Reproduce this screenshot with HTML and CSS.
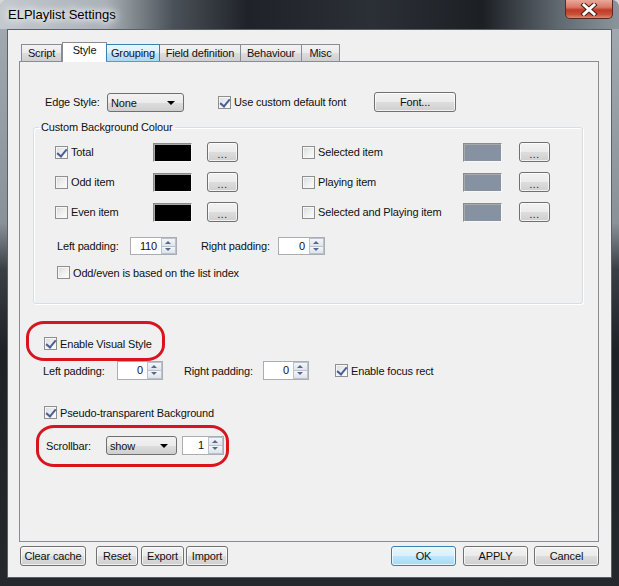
FILE: index.html
```html
<!DOCTYPE html>
<html lang="en">
<head>
    <meta charset="UTF-8">
    <title>ELPlaylist Settings</title>
    <link rel="stylesheet" href="styles.css">
</head>
<body>
    <div class="window">
        <div class="titlebar">
            <span class="title">ELPlaylist Settings</span>
            <span class="close-btn">
                <svg width="20" height="13" viewBox="0 0 20 13">
                    <path d="M5 2 L15 11 M15 2 L5 11" stroke="#4a2018" stroke-width="5" stroke-linecap="square"/>
                    <path d="M5 2 L15 11 M15 2 L5 11" stroke="#fff" stroke-width="3" stroke-linecap="square"/>
                </svg>
            </span>
        </div>

        <div class="client">
            <div class="tabs">
                <span class="tab w-script">Script</span>
                <span class="tab active w-style">Style</span>
                <span class="tab hover w-grouping">Grouping</span>
                <span class="tab w-field">Field definition</span>
                <span class="tab w-behaviour">Behaviour</span>
                <span class="tab w-misc">Misc</span>
            </div>

            <div class="panel">
                <div class="edge-row">
                    <span class="lbl edge-lbl">Edge Style:</span>
                    <span class="combo edge-combo">None<i class="caret"></i></span>
                    <span class="check font-check"><span class="box checked"></span>Use custom default font</span>
                    <span class="btn font-btn">Font...</span>
                </div>

                <fieldset class="group">
                    <legend>Custom Background Colour</legend>
                    <div class="colour-grid">
                        <span class="check"><span class="box checked"></span>Total</span>
                        <span class="swatch black"></span>
                        <span class="btn dots">...</span>
                        <span class="check"><span class="box"></span>Selected item</span>
                        <span class="swatch slate"></span>
                        <span class="btn dots">...</span>

                        <span class="check"><span class="box"></span>Odd item</span>
                        <span class="swatch black"></span>
                        <span class="btn dots">...</span>
                        <span class="check"><span class="box"></span>Playing item</span>
                        <span class="swatch slate"></span>
                        <span class="btn dots">...</span>

                        <span class="check"><span class="box"></span>Even item</span>
                        <span class="swatch black"></span>
                        <span class="btn dots">...</span>
                        <span class="check"><span class="box"></span>Selected and Playing item</span>
                        <span class="swatch slate"></span>
                        <span class="btn dots">...</span>
                    </div>

                    <div class="pad-row group-pad">
                        <span class="lbl gl-left">Left padding:</span>
                        <span class="spin"><span class="val">110</span><span class="arrows"><i class="up"></i><i class="down"></i></span></span>
                        <span class="lbl gl-right">Right padding:</span>
                        <span class="spin"><span class="val">0</span><span class="arrows"><i class="up"></i><i class="down"></i></span></span>
                    </div>

                    <span class="check odd-even"><span class="box"></span>Odd/even is based on the list index</span>
                </fieldset>

                <span class="check visual-check"><span class="box checked"></span>Enable Visual Style</span>

                <div class="pad-row visual-pad">
                    <span class="lbl vl-left">Left padding:</span>
                    <span class="spin sm"><span class="val">0</span><span class="arrows"><i class="up"></i><i class="down"></i></span></span>
                    <span class="lbl vl-right">Right padding:</span>
                    <span class="spin sm"><span class="val">0</span><span class="arrows"><i class="up"></i><i class="down"></i></span></span>
                    <span class="check focus-check"><span class="box checked"></span>Enable focus rect</span>
                </div>

                <span class="check pseudo-check"><span class="box checked"></span>Pseudo-transparent Background</span>

                <div class="scroll-row">
                    <span class="lbl scroll-lbl">Scrollbar:</span>
                    <span class="combo scroll-combo">show<i class="caret"></i></span>
                    <span class="spin xs"><span class="val">1</span><span class="arrows"><i class="up"></i><i class="down"></i></span></span>
                </div>

                <span class="mark mark-visual"></span>
                <span class="mark mark-scroll"></span>
            </div>

            <div class="footer">
                <span class="btn fb w-clear">Clear cache</span>
                <span class="btn fb w-reset">Reset</span>
                <span class="btn fb w-export">Export</span>
                <span class="btn fb w-import">Import</span>
                <span class="btn fb default w-ok">OK</span>
                <span class="btn fb w-apply">APPLY</span>
                <span class="btn fb w-cancel">Cancel</span>
            </div>
        </div>
    </div>
</body>
</html>
```

FILE: styles.css
```css
* {
    margin: 0;
    padding: 0;
    box-sizing: border-box;
}

body {
    background: #d8d8d8;
    font-family: 'Liberation Sans', Arial, sans-serif;
    font-size: 11px;
    letter-spacing: -0.15px;
    color: #111;
}

.window {
    width: 619px;
    height: 586px;
    border-radius: 7px 7px 0 0;
    background: linear-gradient(to bottom, #a4acb3 0%, #8a9299 38%, #3a3f46 46%, #1e2126 60%, #25292e 100%);
    display: flex;
    flex-direction: column;
    overflow: hidden;
}

.titlebar {
    height: 29px;
    display: flex;
    justify-content: space-between;
    background: linear-gradient(to right, #c3c9ce 0%, #aab1b7 17%, #4b5158 28%, #1f2329 40%, #2b3036 60%, #1c2025 78%, #5f676f 90%, #8d959c 100%);
}

.title {
    padding: 7px 0 0 8px;
    font-size: 13px;
    letter-spacing: 0;
    color: #000;
    text-shadow: 0 0 6px #fff, 0 0 10px #fff, 0 0 14px #eef;
    white-space: nowrap;
}

.close-btn {
    width: 48px;
    height: 19px;
    margin-right: 6px;
    border: 1px solid #5a2a22;
    border-top: none;
    border-radius: 0 0 5px 5px;
    background: linear-gradient(to bottom, #e9a999 0%, #d9786a 40%, #c23a26 55%, #c8503a 80%, #dd8a6a 100%);
    display: flex;
    align-items: center;
    justify-content: center;
}

.client {
    margin: 0 7px 8px 7px;
    flex: 1;
    background: #f0f0f0;
    border: 1px solid #5b6068;
    display: flex;
    flex-direction: column;
}

/* tabs */
.tabs {
    margin-top: 12px;
    padding-left: 13px;
    height: 19px;
    display: flex;
    align-items: flex-end;
    position: relative;
    z-index: 1;
}

.tab {
    height: 17px;
    border: 1px solid #898c95;
    border-bottom: none;
    border-left: none;
    background: linear-gradient(to bottom, #f2f2f2 0%, #ebebeb 50%, #dddddd 51%, #cfcfcf 100%);
    text-align: center;
    line-height: 17px;
    white-space: nowrap;
}

.w-script { width: 41px; border-left: 1px solid #898c95; }
.w-style { width: 45px; }
.w-grouping { width: 53px; }
.w-field { width: 81px; }
.w-behaviour { width: 61px; }
.w-misc { width: 38px; }

.tab.active {
    height: 20px;
    margin-bottom: -1px;
    background: #fff;
    border-left: 1px solid #898c95;
    line-height: 14px;
    padding-bottom: 4px;
}

.tab.hover {
    background: linear-gradient(to bottom, #eaf6fd 0%, #d9f0fc 50%, #bee6fd 51%, #a7d9f5 100%);
    border-color: #3c7fb1;
    border-left: 1px solid #3c7fb1;
    margin-left: -1px;
    width: 54px;
}

/* panel */
.panel {
    margin-left: 11px;
    width: 580px;
    height: 481px;
    border: 1px solid #898c95;
    background: #f0f0f0;
    position: relative;
}

.lbl {
    display: inline-block;
    white-space: nowrap;
}

.edge-row {
    margin-top: 30px;
    height: 20px;
    padding-left: 25px;
    display: flex;
    align-items: center;
}

.edge-lbl { width: 62px; }
.edge-combo { width: 77px; }
.font-check { margin-left: 34px; width: 156px; }
.font-btn { width: 82px; height: 20px; }

.combo {
    height: 19px;
    border: 1px solid #707070;
    border-radius: 3px;
    background: linear-gradient(to bottom, #f2f2f2 0%, #ebebeb 50%, #dddddd 51%, #cfcfcf 100%);
    padding-left: 3px;
    line-height: 18px;
    position: relative;
}

.caret {
    position: absolute;
    right: 8px;
    top: 7px;
    border-left: 4px solid transparent;
    border-right: 4px solid transparent;
    border-top: 4px solid #000;
}

.btn {
    display: flex;
    align-items: center;
    justify-content: center;
    border: 1px solid #707070;
    border-radius: 3px;
    background: linear-gradient(to bottom, #f2f2f2 0%, #ebebeb 50%, #dddddd 51%, #cfcfcf 100%);
    box-shadow: inset 0 0 0 1px rgba(255,255,255,0.7);
    white-space: nowrap;
}

.check {
    display: flex;
    align-items: center;
    height: 15px;
    white-space: nowrap;
}

.box {
    width: 13px;
    height: 13px;
    margin-right: 3px;
    flex: none;
    border: 1px solid #8e8f8f;
    background: linear-gradient(135deg, #d8dadc 0%, #f2f2f2 60%, #fcfcfc 100%);
    box-shadow: inset 0 0 0 1px #f6f6f6;
    position: relative;
}

.box.checked::after {
    content: "";
    position: absolute;
    left: 3px;
    top: 0px;
    width: 4px;
    height: 8px;
    border-right: 2px solid #4a5f97;
    border-bottom: 2px solid #4a5f97;
    transform: rotate(40deg);
}

/* group box */
.group {
    margin: 7px 0 0 13px;
    width: 550px;
    height: 185px;
    border: 1px solid #d5dfe5;
    border-radius: 3px;
    box-shadow: inset 1px 1px 0 #fff, 1px 1px 0 #fff;
    padding: 0;
}

.group legend {
    margin-left: 5px;
    padding: 0 2px;
    line-height: 16px;
}

.colour-grid {
    margin-top: 7px;
    padding-left: 21px;
    display: grid;
    grid-template-columns: 98px 54px 95px 161px 56px 31px;
    grid-auto-rows: 20px;
    row-gap: 10px;
    align-items: center;
}

.swatch {
    width: 39px;
    height: 19px;
    border: 1px solid;
    border-color: #8a8a8a #f8f8f8 #f8f8f8 #8a8a8a;
    box-shadow: inset 1px 1px 0 #a8a8a8;
}

.swatch.black { background: #000; }
.swatch.slate { background: #8691a2; }

.dots {
    width: 31px;
    height: 20px;
    font-size: 10px;
    padding-top: 4px;
    letter-spacing: 0.5px;
}

.pad-row {
    display: flex;
    align-items: center;
    height: 18px;
}

.group-pad {
    margin-top: 15px;
    padding-left: 23px;
}

.gl-left { width: 73px; }
.gl-right { margin-left: 24px; width: 77px; }

.spin {
    width: 47px;
    height: 18px;
    display: flex;
    border: 1px solid #abadb3;
    background: #fff;
}

.spin.sm { width: 46px; height: 19px; }
.spin.xs { width: 42px; height: 19px; margin-left: 5px; }

.spin .val {
    flex: 1;
    text-align: right;
    padding-right: 4px;
    line-height: 17px;
}

.spin .arrows {
    width: 15px;
    display: flex;
    flex-direction: column;
}

.spin .arrows i {
    flex: 1;
    border: 1px solid #b8c3cf;
    background: linear-gradient(to bottom, #f4f6f8, #dfe4ea);
    position: relative;
}

.spin .arrows i.down { border-top: none; }

.spin .arrows i::after {
    content: "";
    position: absolute;
    left: 3px;
    top: 2px;
    border-left: 3.5px solid transparent;
    border-right: 3.5px solid transparent;
}

.spin .arrows i.up::after { border-bottom: 3px solid #55698a; }
.spin .arrows i.down::after { border-top: 3px solid #55698a; top: 1px; }

.odd-even {
    margin-top: 10px;
    margin-left: 23px;
}

/* visual style */
.visual-check {
    margin-top: 32px;
    margin-left: 24px;
}

.visual-pad {
    margin-top: 10px;
    padding-left: 23px;
    height: 19px;
}

.vl-left { width: 74px; }
.vl-right { margin-left: 21px; width: 79px; }
.focus-check { margin-left: 26px; }

.pseudo-check {
    margin-top: 25px;
    margin-left: 24px;
}

.scroll-row {
    margin-top: 16px;
    padding-left: 26px;
    display: flex;
    align-items: center;
    height: 19px;
}

.scroll-lbl { width: 60px; }
.scroll-combo { width: 71px; }

.mark {
    position: absolute;
    border: 3px solid #d8141e;
    border-radius: 18px / 16px;
}

.mark-visual { left: 6px; top: 259px; width: 139px; height: 40px; }
.mark-scroll { left: 16px; top: 363px; width: 193px; height: 42px; }

/* footer buttons */
.footer {
    margin-top: 4px;
    padding: 0 12px;
    display: flex;
}

.fb { height: 20px; }

.w-clear { width: 66px; }
.w-reset { width: 42px; margin-left: 10px; }
.w-export { width: 43px; margin-left: 3px; }
.w-import { width: 42px; margin-left: 2px; }
.w-ok { width: 65px; margin-left: auto; }
.w-apply { width: 65px; margin-left: 7px; }
.w-cancel { width: 65px; margin-left: 6px; }

.btn.default {
    border-color: #3c7fb1;
    background: linear-gradient(to bottom, #eaf6fd 0%, #d9f0fc 50%, #bee6fd 51%, #a7d9f5 100%);
}
```
